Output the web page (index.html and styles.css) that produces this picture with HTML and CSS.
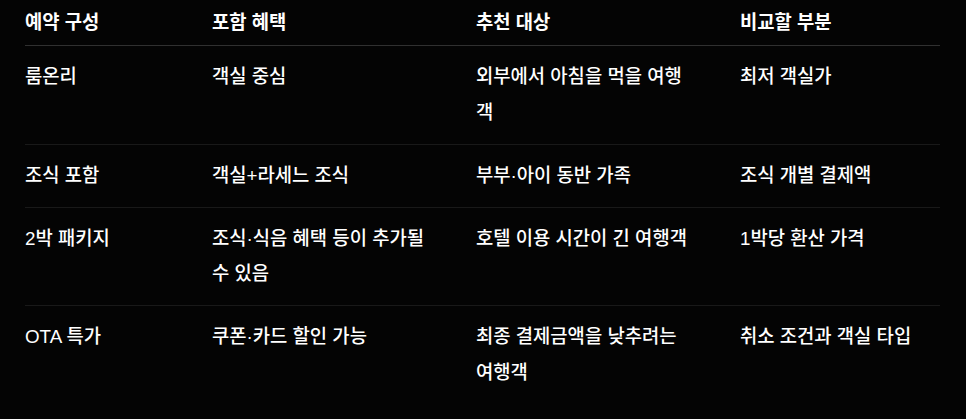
FILE: index.html
```html
<!DOCTYPE html>
<html lang="ko">
<head>
<meta charset="utf-8">
<title>예약 구성 비교</title>
<link rel="stylesheet" href="styles.css">
</head>
<body>
<div class="page">
  <table class="compare">
    <colgroup>
      <col class="c1"><col class="c2"><col class="c3"><col class="c4">
    </colgroup>
    <thead>
      <tr><th>예약 구성</th><th>포함 혜택</th><th>추천 대상</th><th>비교할 부분</th></tr>
    </thead>
    <tbody>
      <tr><td>룸온리</td><td>객실 중심</td><td>외부에서 아침을 먹을 여행객</td><td>최저 객실가</td></tr>
      <tr><td>조식 포함</td><td>객실+라세느 조식</td><td>부부·아이 동반 가족</td><td>조식 개별 결제액</td></tr>
      <tr><td>2박 패키지</td><td>조식·식음 혜택 등이 추가될 수 있음</td><td>호텔 이용 시간이 긴 여행객</td><td>1박당 환산 가격</td></tr>
      <tr><td>OTA 특가</td><td>쿠폰·카드 할인 가능</td><td>최종 결제금액을 낮추려는 여행객</td><td>취소 조건과 객실 타입</td></tr>
    </tbody>
  </table>
</div>
</body>
</html>
```

FILE: styles.css
```css
html, body {
  margin: 0;
  padding: 0;
  background: #040404;
}
.page {
  padding: 0 26px 0 25px;
  font-family: "Liberation Sans", "Noto Sans CJK KR", sans-serif;
  font-size: 18.8px;
  color: #ffffff;
}
.compare {
  width: 100%;
  border-collapse: collapse;
  table-layout: fixed;
}
.c1 { width: 187px; }
.c2 { width: 264px; }
.c3 { width: 264px; }
.c4 { width: auto; }
.compare th,
.compare td {
  text-align: left;
  vertical-align: top;
  line-height: 35.5px;
  padding: 13.25px 47px 13.25px 0;
}
.compare th:last-child,
.compare td:last-child {
  padding-right: 0;
}
.compare th {
  font-weight: 700;
  padding-top: 4.5px;
  padding-bottom: 5px;
  border-bottom: 1px solid #303030;
}
.compare td {
  font-weight: 500;
  border-bottom: 1px solid #191919;
}
.compare tbody tr:last-child td {
  border-bottom: none;
}
```
